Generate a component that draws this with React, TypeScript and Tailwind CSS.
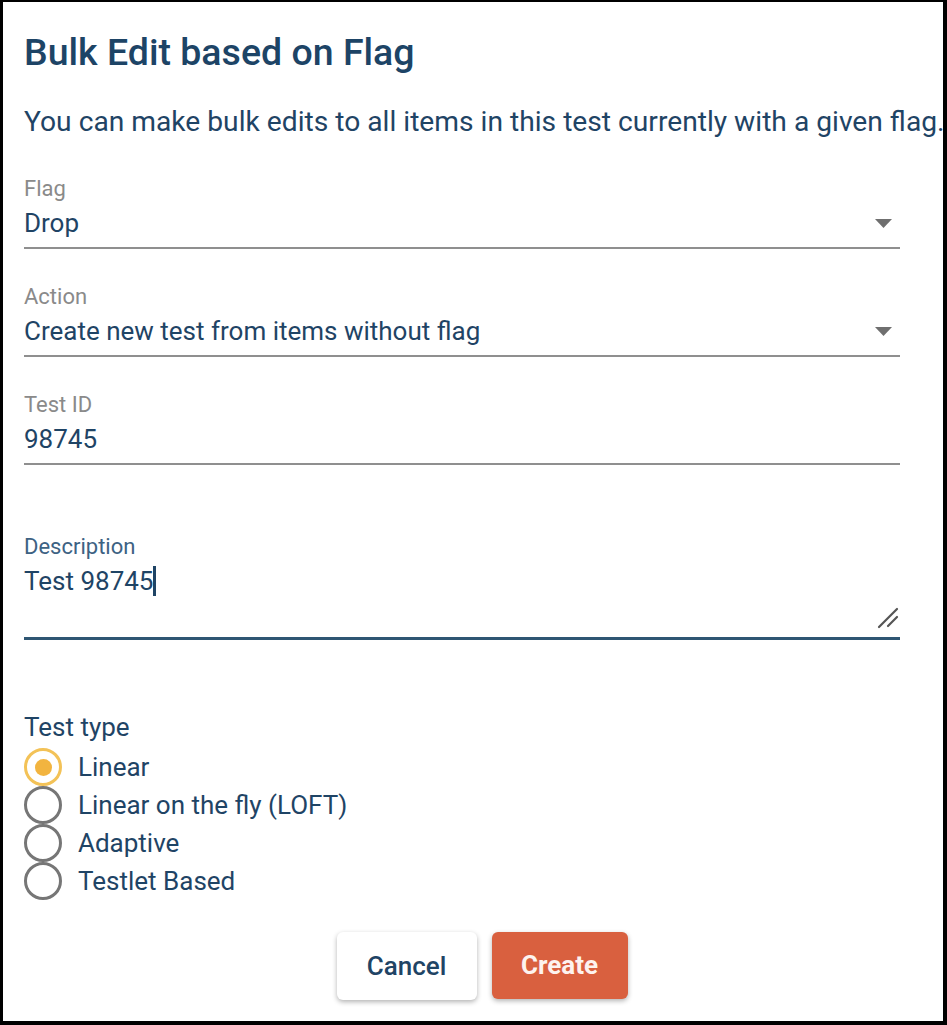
import { useState } from "react";

const options = ["Linear", "Linear on the fly (LOFT)", "Adaptive", "Testlet Based"];

function CaretDown() {
  return (
    <svg width="17" height="9" viewBox="0 0 17 9" className="shrink-0">
      <path d="M0 0 L17 0 L8.5 9 Z" fill="#6f6f6f" />
    </svg>
  );
}

function SelectField({ label, value }: { label: string; value: string }) {
  return (
    <div className="flex flex-col border-b-2 border-[#8f8f8f] pb-[7px]">
      <div className="text-[22px] leading-[26px] text-[#8a8a8a]">{label}</div>
      <div className="mt-[4px] flex items-center justify-between pr-[8px]">
        <span className="text-[26px] leading-[34px] text-[#1f4465]">{value}</span>
        <CaretDown />
      </div>
    </div>
  );
}

function Radio({ label, checked }: { label: string; checked: boolean }) {
  return (
    <div className="flex items-center h-[38px]">
      <div
        className={
          checked
            ? "w-[38px] h-[38px] rounded-full border-[3px] border-[#f3c257] flex items-center justify-center"
            : "w-[38px] h-[38px] rounded-full border-[3px] border-[#767676]"
        }
      >
        {checked && <div className="w-[17px] h-[17px] rounded-full bg-[#f2b43f]" />}
      </div>
      <span className="ml-[16px] text-[26px] leading-[34px] text-[#1f4465]">{label}</span>
    </div>
  );
}

export default function App() {
  const [type, setType] = useState("Linear");

  return (
    <div
      className="w-[947px] h-[1025px] bg-white border-l-[3px] border-t-2 border-r-4 border-b-4 border-black overflow-hidden"
      style={{ fontFamily: "Roboto, 'Noto Sans', sans-serif" }}
    >
      <div className="flex flex-col pl-[21px] pr-[43px]">
        <h1 className="mt-[28px] text-[37.5px] leading-[44px] font-medium text-[#1d4466]">
          Bulk Edit based on Flag
        </h1>
        <p className="mt-[30px] text-[28.2px] leading-[36px] text-[#1f4465] whitespace-nowrap">
          You can make bulk edits to all items in this test currently with a given flag.
        </p>

        {/* Select / text fields */}
        <div className="mt-[36px] flex flex-col gap-[35px]">
          <SelectField label="Flag" value="Drop" />
          <SelectField label="Action" value="Create new test from items without flag" />
          <div className="flex flex-col border-b-2 border-[#8f8f8f] pb-[7px]">
            <div className="text-[22px] leading-[26px] text-[#8a8a8a]">Test ID</div>
            <div className="mt-[4px] text-[26px] leading-[34px] text-[#1f4465]">98745</div>
          </div>
        </div>

        {/* Description (focused textarea) */}
        <div className="mt-[69px] flex flex-col border-b-[3px] border-[#2f5673]">
          <div className="text-[22px] leading-[26px] text-[#3d6283]">Description</div>
          <div className="mt-[4px] flex justify-between h-[73px]">
            <div className="flex items-center h-[34px]">
              <span className="text-[26px] leading-[34px] text-[#1f4465]">Test 98745</span>
              <div className="w-[3px] h-[30px] bg-[#1f4465]" />
            </div>
            <svg width="22" height="22" viewBox="0 0 22 22" className="self-end mb-[8px] mr-[1px]">
              <path d="M2 20 L20 2 M11 19 L20 10" stroke="#555" strokeWidth="2.2" strokeLinecap="round" />
            </svg>
          </div>
        </div>

        <div className="mt-[70px] text-[26px] leading-[34px] text-[#1f4465]">Test type</div>
        <div className="flex flex-col mt-[4px]">
          {options.map((o) => (
            <div key={o} onClick={() => setType(o)} className="cursor-pointer">
              <Radio label={o} checked={type === o} />
            </div>
          ))}
        </div>

        <div className="mt-[32px] flex justify-center gap-[15px] pl-[40px]">
          <button className="w-[140px] h-[68px] rounded-[6px] bg-white text-[26px] font-medium text-[#1f4465] shadow-[0_2px_5px_rgba(0,0,0,0.3)]">
            Cancel
          </button>
          <button className="w-[136px] h-[67px] rounded-[6px] bg-[#d9603f] text-[26px] font-bold text-[#fdf3ef] shadow-[0_2px_5px_rgba(0,0,0,0.3)]">
            Create
          </button>
        </div>
      </div>
    </div>
  );
}
